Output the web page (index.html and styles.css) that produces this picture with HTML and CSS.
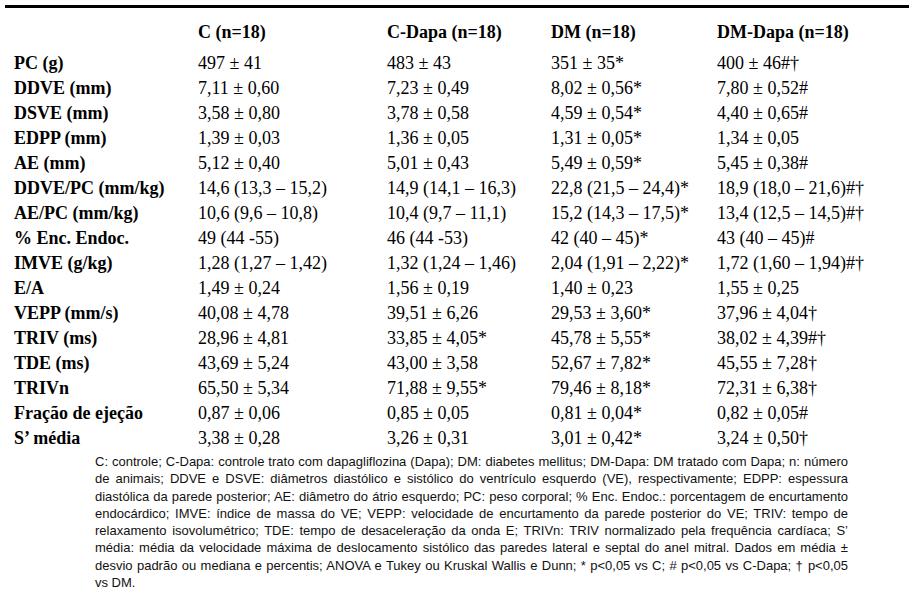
FILE: index.html
```html
<!DOCTYPE html>
<html lang="pt">
<head>
<meta charset="utf-8">
<title>Tabela</title>
<link rel="stylesheet" href="styles.css">
</head>
<body>
<div class="page">
  <table class="data">
    <colgroup>
      <col class="c-label"><col class="c-1"><col class="c-2"><col class="c-3"><col class="c-4">
    </colgroup>
    <thead>
      <tr><th></th><th>C (n=18)</th><th>C-Dapa (n=18)</th><th>DM (n=18)</th><th>DM-Dapa (n=18)</th></tr>
    </thead>
    <tbody>
      <tr><th>PC (g)</th><td>497 ± 41</td><td>483 ± 43</td><td>351 ± 35*</td><td>400 ± 46#†</td></tr>
      <tr><th>DDVE (mm)</th><td>7,11 ± 0,60</td><td>7,23 ± 0,49</td><td>8,02 ± 0,56*</td><td>7,80 ± 0,52#</td></tr>
      <tr><th>DSVE (mm)</th><td>3,58 ± 0,80</td><td>3,78 ± 0,58</td><td>4,59 ± 0,54*</td><td>4,40 ± 0,65#</td></tr>
      <tr><th>EDPP (mm)</th><td>1,39 ± 0,03</td><td>1,36 ± 0,05</td><td>1,31 ± 0,05*</td><td>1,34 ± 0,05</td></tr>
      <tr><th>AE (mm)</th><td>5,12 ± 0,40</td><td>5,01 ± 0,43</td><td>5,49 ± 0,59*</td><td>5,45 ± 0,38#</td></tr>
      <tr><th>DDVE/PC (mm/kg)</th><td>14,6 (13,3 – 15,2)</td><td>14,9 (14,1 – 16,3)</td><td>22,8 (21,5 – 24,4)*</td><td>18,9 (18,0 – 21,6)#†</td></tr>
      <tr><th>AE/PC (mm/kg)</th><td>10,6 (9,6 – 10,8)</td><td>10,4 (9,7 – 11,1)</td><td>15,2 (14,3 – 17,5)*</td><td>13,4 (12,5 – 14,5)#†</td></tr>
      <tr><th>% Enc. Endoc.</th><td>49 (44 -55)</td><td>46 (44 -53)</td><td>42 (40 – 45)*</td><td>43 (40 – 45)#</td></tr>
      <tr><th>IMVE (g/kg)</th><td>1,28 (1,27 – 1,42)</td><td>1,32 (1,24 – 1,46)</td><td>2,04 (1,91 – 2,22)*</td><td>1,72 (1,60 – 1,94)#†</td></tr>
      <tr><th>E/A</th><td>1,49 ± 0,24</td><td>1,56 ± 0,19</td><td>1,40 ± 0,23</td><td>1,55 ± 0,25</td></tr>
      <tr><th>VEPP (mm/s)</th><td>40,08 ± 4,78</td><td>39,51 ± 6,26</td><td>29,53 ± 3,60*</td><td>37,96 ± 4,04†</td></tr>
      <tr><th>TRIV (ms)</th><td>28,96 ± 4,81</td><td>33,85 ± 4,05*</td><td>45,78 ± 5,55*</td><td>38,02 ± 4,39#†</td></tr>
      <tr><th>TDE (ms)</th><td>43,69 ± 5,24</td><td>43,00 ± 3,58</td><td>52,67 ± 7,82*</td><td>45,55 ± 7,28†</td></tr>
      <tr><th>TRIVn</th><td>65,50 ± 5,34</td><td>71,88 ± 9,55*</td><td>79,46 ± 8,18*</td><td>72,31 ± 6,38†</td></tr>
      <tr><th>Fração de ejeção</th><td>0,87 ± 0,06</td><td>0,85 ± 0,05</td><td>0,81 ± 0,04*</td><td>0,82 ± 0,05#</td></tr>
      <tr><th>S’ média</th><td>3,38 ± 0,28</td><td>3,26 ± 0,31</td><td>3,01 ± 0,42*</td><td>3,24 ± 0,50†</td></tr>
    </tbody>
  </table>
  <div class="note">
    <span class="ln">C: controle; C-Dapa: controle trato com dapagliflozina (Dapa); DM: diabetes mellitus; DM-Dapa: DM tratado com Dapa; n: número</span>
    <span class="ln">de animais; DDVE e DSVE: diâmetros diastólico e sistólico do ventrículo esquerdo (VE), respectivamente; EDPP: espessura</span>
    <span class="ln">diastólica da parede posterior; AE: diâmetro do átrio esquerdo; PC: peso corporal; % Enc. Endoc.: porcentagem de encurtamento</span>
    <span class="ln">endocárdico; IMVE: índice de massa do VE; VEPP: velocidade de encurtamento da parede posterior do VE; TRIV: tempo de</span>
    <span class="ln">relaxamento isovolumétrico; TDE: tempo de desaceleração da onda E; TRIVn: TRIV normalizado pela frequência cardíaca; S’</span>
    <span class="ln">média: média da velocidade máxima de deslocamento sistólico das paredes lateral e septal do anel mitral. Dados em média ±</span>
    <span class="ln">desvio padrão ou mediana e percentis; ANOVA e Tukey ou Kruskal Wallis e Dunn; * p&lt;0,05 vs C; # p&lt;0,05 vs C-Dapa; † p&lt;0,05</span>
    <span class="ln last">vs DM.</span>
  </div>
</div>
</body>
</html>
```

FILE: styles.css
```css
html, body {
  margin: 0;
  padding: 0;
  background: #ffffff;
}

.page {
  padding: 5px 0 0 5px;
  width: 904px;
}

.data {
  width: 904px;
  border-collapse: collapse;
  table-layout: fixed;
  border-top: 3px solid #000;
  font-family: "Liberation Serif", "Times New Roman", serif;
  font-size: 18px;
  color: #000;
}

.c-label { width: 193px; }
.c-1 { width: 189px; }
.c-2 { width: 164px; }
.c-3 { width: 166px; }
.c-4 { width: 192px; }

.data th,
.data td {
  padding: 0;
  height: 25px;
  line-height: 25px;
  text-align: left;
  white-space: nowrap;
  vertical-align: middle;
}

.data th {
  font-weight: bold;
}

.data td {
  font-weight: normal;
}

.data tbody th {
  padding-left: 9px;
}

.data thead th {
  padding-top: 12px;
  padding-bottom: 6px;
}

.note {
  margin: 2px 0 0 90px;
  width: 753px;
  font-family: "Liberation Sans", Arial, sans-serif;
  font-size: 13px;
  line-height: 17.3px;
  color: #111;
}

.note .ln {
  display: block;
  text-align: justify;
  text-align-last: justify;
  white-space: nowrap;
}

.note .ln.last {
  text-align-last: left;
}
```
